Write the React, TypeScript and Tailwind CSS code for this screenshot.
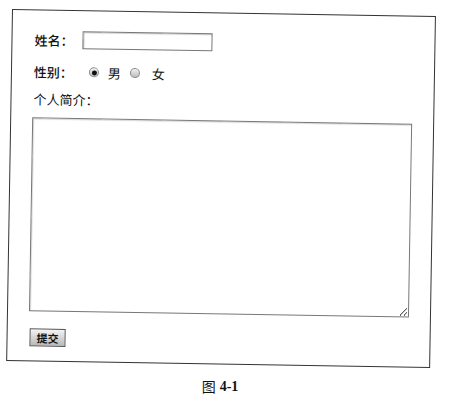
import React from "react";

const cjk = { fontFamily: '"Noto Sans CJK SC", "Noto Sans", sans-serif' };

function Radio({ checked }: { checked?: boolean }) {
  return (
    <span className="flex h-[10px] w-[10px] items-center justify-center rounded-full border border-[#8a8a8a] bg-gradient-to-b from-[#f2f2f2] to-[#bdbdbd]">
      {checked && <span className="h-[5px] w-[5px] rounded-full bg-[#111]" />}
    </span>
  );
}

export default function App() {
  return (
    <div className="min-h-[407px] w-[473px] bg-white pl-[12px] pt-[9px] text-[#111]" style={cjk}>
      <div className="flex h-[352px] w-[424px] origin-top-left rotate-[0.95deg] flex-col border border-[#333] pl-[22px] pt-[20px] text-[13px] leading-none">
        <div className="flex h-[18px] items-center">
          <span className="w-[48px] font-medium">姓名：</span>
          <input className="h-[18px] w-[130px] border border-[#777] shadow-[inset_1px_1px_1px_rgba(0,0,0,0.2)] outline-none" />
        </div>

        <div className="mt-[14px] flex h-[18px] items-center">
          <span className="w-[55px] font-medium">性别：</span>
          <Radio checked />
          <span className="ml-[9px]">男</span>
          <span className="ml-[9px]"><Radio /></span>
          <span className="ml-[12px]">女</span>
        </div>

        <div className="mt-[9px] flex h-[18px] items-center">
          <span>个人简介：</span>
        </div>

        <textarea className="-ml-[1px] mt-[10px] h-[194px] w-[380px] resize border border-[#777] shadow-[inset_1px_1px_1px_rgba(0,0,0,0.15)] outline-none" />

        <div className="mt-[17px]">
          <button className="flex h-[18px] w-[36px] items-center justify-center border border-[#555] bg-gradient-to-b from-[#f4f4f4] to-[#b8b8b8] text-[11px] font-bold">
            提交
          </button>
        </div>
      </div>

      <div className="mt-[15px] flex w-[424px] justify-center pr-[8px] text-[14px]">
        <span>图</span>
        <span className="ml-[4px] font-bold" style={{ fontFamily: '"Liberation Serif", serif' }}>4-1</span>
      </div>
    </div>
  );
}
